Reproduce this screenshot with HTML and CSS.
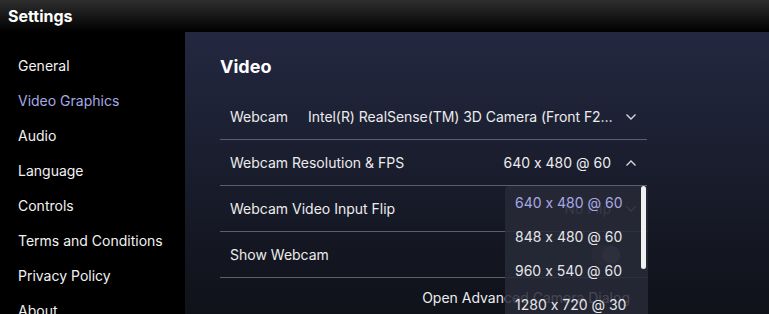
FILE: index.html
```html
<!DOCTYPE html>
<html>
<head>
<meta charset="UTF-8">
<title>Settings</title>
<link rel="stylesheet" href="styles.css">
</head>
<body>

	<div class="titlebar">Settings</div>

	<div class="window">
		<!-- 왼쪽 메뉴 -->
		<ul class="menu">
			<li>General</li>
			<li class="active">Video Graphics</li>
			<li>Audio</li>
			<li>Language</li>
			<li>Controls</li>
			<li>Terms and Conditions</li>
			<li>Privacy Policy</li>
			<li>About</li>
		</ul>

		<div class="panel">
			<h2>Video</h2>

			<div class="row">
				<span class="label">Webcam</span>
				<span class="value wide">Intel(R) RealSense(TM) 3D Camera (Front F200)</span>
				<svg class="chev" viewBox="0 0 12 8"><path d="M1.5 1.5 L6 6 L10.5 1.5"/></svg>
			</div>

			<div class="row open">
				<span class="label">Webcam Resolution &amp; FPS</span>
				<span class="value">640 x 480 @ 60</span>
				<svg class="chev" viewBox="0 0 12 8"><path d="M1.5 6.5 L6 2 L10.5 6.5"/></svg>

				<div class="dropdown">
					<div class="item selected">640 x 480 @ 60</div>
					<div class="item">848 x 480 @ 60</div>
					<div class="item">960 x 540 @ 60</div>
					<div class="item">1280 x 720 @ 30</div>
					<div class="thumb"></div>
				</div>
			</div>

			<div class="row">
				<span class="label">Webcam Video Input Flip</span>
				<span class="value dim">No Flip</span>
				<svg class="chev dim" viewBox="0 0 12 8"><path d="M1.5 1.5 L6 6 L10.5 1.5"/></svg>
			</div>

			<div class="row">
				<span class="label">Show Webcam</span>
				<span class="toggle"><span class="knob"></span></span>
			</div>

			<div class="advanced">Open Advanced Camera Dialog</div>
		</div>
	</div>

</body>
</html>
```

FILE: styles.css
```css
html, body {
	margin: 0;
	height: 100%;
	overflow: hidden;
	background: #000;
	font-family: Inter, "Noto Sans", sans-serif;
	font-feature-settings: "calt" 0;
	color: #ececec;
}

.titlebar {
	height: 32px;
	line-height: 32px;
	padding-left: 8px;
	font-size: 16px;
	font-weight: 700;
	color: #fff;
	background: linear-gradient(to bottom, #2e2e2e, #000);
}

.window {
	display: flex;
	height: 282px;
}

.menu {
	flex: none;
	list-style: none;
	margin: 0;
	padding: 18px 0 0 18px;
	width: 167px;
	background: #000;
}

.menu li {
	height: 35px;
	line-height: 32px;
	font-size: 14px;
	color: #f2f2f2;
	white-space: nowrap
}

.menu li.active {
	color: #a7a9e6
}

.panel {
	flex: 1;
	min-width: 0;
	padding: 0 122px 0 35px;
	background: linear-gradient(to bottom, #232841, #141722 75%, #10121a);
}

h2 {
	margin: 0;
	padding-top: 24px;
	height: 38px;
	line-height: 22px;
	font-size: 18px;
	font-weight: 700;
	color: #fff;
}

.row {
	position: relative;
	display: flex;
	align-items: center;
	height: 45px;
	padding: 0 10px;
	border-bottom: 1px solid #5c5f6b;
	font-size: 14px;
}

.label {
	white-space: nowrap
}

.value {
	margin-left: auto;
	white-space: nowrap
}

.value.wide {
	flex: 1;
	min-width: 0;
	margin-left: 20px;
	letter-spacing: -0.05px;
	overflow: hidden;
	text-overflow: ellipsis;
}

.chev {
	flex: none;
	width: 12px;
	height: 8px;
	margin-left: 14px;
	fill: none;
	stroke: #d8d8dc;
	stroke-width: 1.4
}

.wide + .chev {
	margin-left: 10px
}

.dim {
	color: #8d8f99;
	stroke: #8d8f99
}

.toggle {
	margin-left: auto;
	margin-right: 16px;
	width: 30px;
	height: 20px;
	border-radius: 10px;
	background: #2b2d39;
	display: flex;
	align-items: center;
	justify-content: flex-end;
}

.knob {
	width: 18px;
	height: 18px;
	margin-right: 1px;
	border-radius: 50%;
	background: #4b4d59
}

.advanced {
	text-align: right;
	padding: 11px 17px 0 0;
	font-size: 14px;
}

/* 열린 드롭다운 목록 */
.dropdown {
	position: absolute;
	z-index: 2;
	left: 285px;
	top: 46px;
	width: 143px;
	height: 140px;
	background: rgba(40, 42, 56, 0.86);
	border-radius: 4px 4px 0 0;
}

.item {
	height: 34px;
	line-height: 34px;
	padding-left: 10px;
	font-size: 14px;
	color: #e6e6ea
}

.item.selected {
	color: #a7a9e6
}

.thumb {
	position: absolute;
	right: 2px;
	top: 0;
	width: 5px;
	height: 83px;
	border-radius: 3px;
	background: #f0f0f0
}
```
